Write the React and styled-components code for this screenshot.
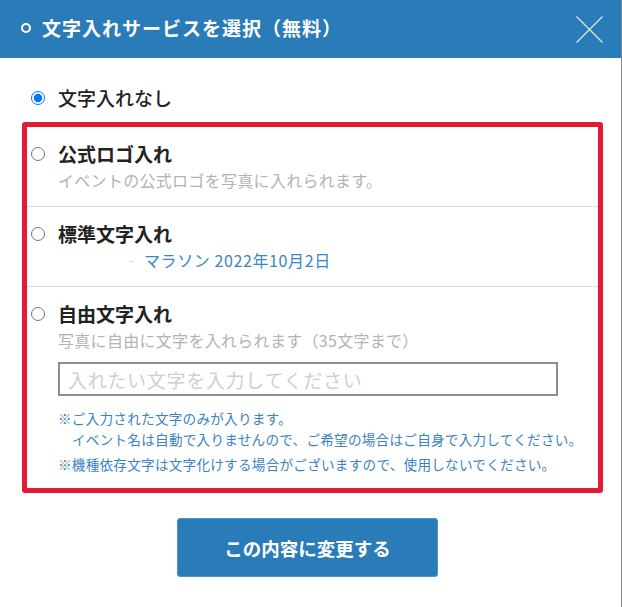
import React from "react";
import styled, { createGlobalStyle } from "styled-components";

const Global = createGlobalStyle`
  html, body { margin: 0; padding: 0; background: #fff; }
  body { font-family: "Noto Sans CJK JP", "Noto Sans", sans-serif; }
  * { box-sizing: border-box; }
`;

const Modal = styled.div`
  width: 100%;
  min-height: 607px;
  border-right: 1px solid #858585;
  background: #fff;
`;

const Header = styled.header`
  height: 58px;
  background: #2a7cb9;
  display: flex;
  align-items: center;
  padding: 0 18px 2px 21px;
`;

const Ring = styled.span`
  width: 10px;
  height: 10px;
  border: 2.5px solid #fff;
  border-radius: 50%;
  margin-right: 11px;
  flex: none;
`;

const Title = styled.h1`
  margin: 0;
  flex: 1;
  color: #fff;
  font-size: 19px;
  font-weight: 700;
  line-height: 26px;
  letter-spacing: 1px;
`;

const Close = styled.button`
  width: 27px;
  height: 27px;
  padding: 0;
  border: 0;
  background: none;
  display: flex;
  margin-top: 2px;
`;

const Body = styled.div`
  padding-top: 27px;
`;

const Option = styled.label`
  display: grid;
  grid-template-columns: 14px 1fr;
  column-gap: 13px;
  align-items: start;
  padding: ${(p) => (p.$boxed ? "14px 0 13px 4px" : "0 0 0 31px")};
  border-top: ${(p) => (p.$divided ? "1px dotted #bdbdbd" : "none")};
  cursor: pointer;
`;

const Radio = styled.input.attrs({ type: "radio" })`
  width: 14px;
  height: 14px;
  margin: 6px 0 0 0;
`;

const OptionTitle = styled.div`
  font-size: 19px;
  line-height: 26px;
  font-weight: ${(p) => p.$weight || 700};
  color: #222;
`;

const Desc = styled.div`
  font-size: 16px;
  line-height: 26px;
  letter-spacing: 0.3px;
  color: #b3b3b3;
`;

const Preview = styled.div`
  font-size: 16px;
  line-height: 26px;
  letter-spacing: 0.6px;
  color: #3a85c6;
  padding-left: 71px;
  display: flex;
  align-items: center;
`;

const Tick = styled.span`
  display: inline-block;
  width: 4px;
  height: 1px;
  background: #dcdcdc;
  margin-right: 11px;
  margin-top: 3px;
`;

const Box = styled.div`
  margin: 11px 0 0 22px;
  width: 581px;
  border: 5px solid #e31a35;
  border-radius: 3px;
`;

const TextInput = styled.input`
  display: block;
  width: 500px;
  height: 34px;
  margin-top: 9px;
  border: 2px solid #8f8f8f;
  padding: 0 8px;
  font-family: inherit;
  font-size: 19px;
  letter-spacing: 0.7px;
  color: #333;
  outline: none;
  &::placeholder { color: #cfcfcf; }
`;

const Notes = styled.div`
  margin-top: 12px;
  display: flex;
  flex-direction: column;
  gap: 4px;
`;

const Note = styled.p`
  margin: 0;
  font-size: 13.6px;
  line-height: 21px;
  letter-spacing: 0.25px;
  color: #3a82c4;
  span { display: block; padding-left: 14px; }
`;

const Footer = styled.div`
  display: flex;
  justify-content: center;
  padding: 25px 6px 0 0;
`;

const Submit = styled.button`
  width: 261px;
  height: 59px;
  background: #2a7cb9;
  border: 1px solid #4c94cc;
  border-radius: 3px;
  color: #fff;
  font-family: inherit;
  font-size: 18.5px;
  font-weight: 700;
  cursor: pointer;
`;

export default function App() {
  return (
    <>
      <Global />
      <Modal>
        <Header>
          <Ring />
          <Title>文字入れサービスを選択（無料）</Title>
          <Close aria-label="閉じる">
            <svg width="27" height="27" viewBox="0 0 27 27">
              <path d="M0.5 0.5 L26.5 26.5 M26.5 0.5 L0.5 26.5" stroke="#d2e3f1" strokeWidth="1.4" fill="none" />
            </svg>
          </Close>
        </Header>
        <Body>
          <Option>
            <Radio name="moji" defaultChecked />
            <OptionTitle $weight={500}>文字入れなし</OptionTitle>
          </Option>
          <Box>
            <Option $boxed>
              <Radio name="moji" />
              <div>
                <OptionTitle>公式ロゴ入れ</OptionTitle>
                <Desc>イベントの公式ロゴを写真に入れられます。</Desc>
              </div>
            </Option>
            <Option $boxed $divided>
              <Radio name="moji" />
              <div>
                <OptionTitle>標準文字入れ</OptionTitle>
                <Preview>
                  <Tick />
                  マラソン 2022年10月2日
                </Preview>
              </div>
            </Option>
            <Option $boxed $divided>
              <Radio name="moji" />
              <div>
                <OptionTitle>自由文字入れ</OptionTitle>
                <Desc>写真に自由に文字を入れられます（35文字まで）</Desc>
                <TextInput placeholder="入れたい文字を入力してください" />
                <Notes>
                  <Note>
                    ※ご入力された文字のみが入ります。
                    <span>イベント名は自動で入りませんので、ご希望の場合はご自身で入力してください。</span>
                  </Note>
                  <Note>※機種依存文字は文字化けする場合がございますので、使用しないでください。</Note>
                </Notes>
              </div>
            </Option>
          </Box>
          <Footer>
            <Submit>この内容に変更する</Submit>
          </Footer>
        </Body>
      </Modal>
    </>
  );
}
